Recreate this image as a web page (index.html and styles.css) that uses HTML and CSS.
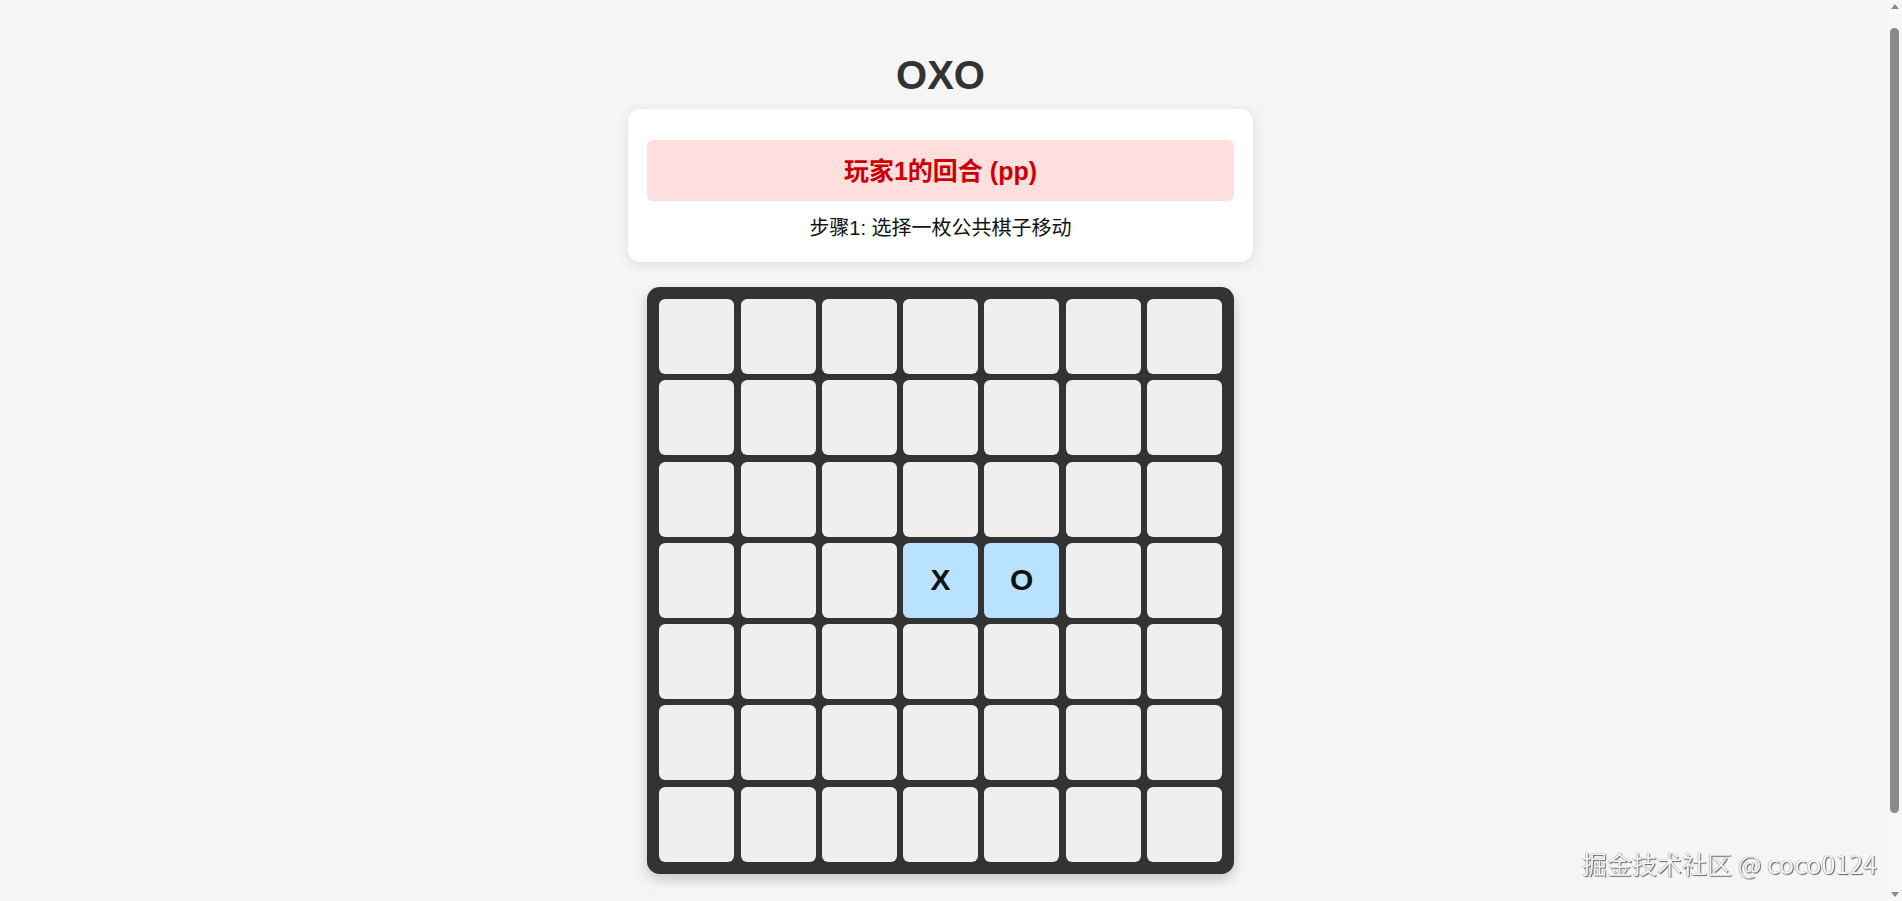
FILE: index.html
```html
<!DOCTYPE html>
<html lang="zh-CN">
<head>
<meta charset="utf-8">
<title>OXO</title>
<link rel="stylesheet" href="styles.css">
</head>
<body>
<main class="app">
  <h1 class="title">OXO</h1>
  <section class="status-card">
    <div class="turn">玩家1的回合 (pp)</div>
    <p class="step">步骤1: 选择一枚公共棋子移动</p>
  </section>
  <div class="board">
    <div class="cell"></div><div class="cell"></div><div class="cell"></div><div class="cell"></div><div class="cell"></div><div class="cell"></div><div class="cell"></div>
    <div class="cell"></div><div class="cell"></div><div class="cell"></div><div class="cell"></div><div class="cell"></div><div class="cell"></div><div class="cell"></div>
    <div class="cell"></div><div class="cell"></div><div class="cell"></div><div class="cell"></div><div class="cell"></div><div class="cell"></div><div class="cell"></div>
    <div class="cell"></div><div class="cell"></div><div class="cell"></div><div class="cell public">X</div><div class="cell public">O</div><div class="cell"></div><div class="cell"></div>
    <div class="cell"></div><div class="cell"></div><div class="cell"></div><div class="cell"></div><div class="cell"></div><div class="cell"></div><div class="cell"></div>
    <div class="cell"></div><div class="cell"></div><div class="cell"></div><div class="cell"></div><div class="cell"></div><div class="cell"></div><div class="cell"></div>
    <div class="cell"></div><div class="cell"></div><div class="cell"></div><div class="cell"></div><div class="cell"></div><div class="cell"></div><div class="cell"></div>
  </div>
</main>
<div class="watermark">掘金技术社区 @ coco0124</div>
<div class="scrollbar" aria-hidden="true">
  <span class="scroll-arrow up"></span>
  <span class="scroll-thumb"></span>
  <span class="scroll-arrow down"></span>
</div>
</body>
</html>
```

FILE: styles.css
```css
* {
  box-sizing: border-box;
}

html, body {
  margin: 0;
  padding: 0;
}

body {
  background: #f5f5f5;
  font-family: "Liberation Sans", Arial, "Noto Sans CJK SC", sans-serif;
  color: #333;
}

.app {
  display: flex;
  flex-direction: column;
  align-items: center;
  padding: 51.5px 21px 126.5px 0;
}

.title {
  margin: 0 0 11.5px;
  font-size: 40px;
  line-height: 46px;
  font-weight: bold;
  color: #333;
}

.status-card {
  width: 625px;
  background: #fff;
  border-radius: 12.5px;
  padding: 18.75px;
  box-shadow: 0 2.5px 12.5px rgba(0, 0, 0, 0.1);
  text-align: center;
}

.turn {
  margin: 12.5px 0;
  padding: 12.5px;
  background: #ffdede;
  border-radius: 6.25px;
  color: #cc0000;
  font-size: 25px;
  line-height: 36px;
  font-weight: bold;
}

.step {
  margin: 0;
  font-size: 20px;
  line-height: 29px;
  color: #111;
}

.board {
  margin-top: 25px;
  display: grid;
  grid-template-columns: repeat(7, 75px);
  grid-template-rows: repeat(7, 75px);
  gap: 6.25px;
  padding: 12.5px;
  background: #333;
  border-radius: 12.5px;
  box-shadow: 0 5px 12.5px rgba(0, 0, 0, 0.2);
}

.cell {
  background: #efefef;
  border-radius: 6.25px;
  display: flex;
  align-items: center;
  justify-content: center;
  font-size: 30px;
  font-weight: bold;
  color: #111;
}

.cell.public {
  background: #b8e2ff;
}

.watermark {
  position: fixed;
  right: 25px;
  bottom: 22px;
  font-family: "Noto Sans CJK SC", sans-serif;
  font-size: 25px;
  line-height: 32px;
  color: #f4f4f4;
  text-shadow: 1px 1px 1px #666, -0.5px -0.5px 0.5px #999;
  pointer-events: none;
}

.scrollbar {
  position: fixed;
  top: 0;
  right: 0;
  width: 15px;
  height: 100vh;
  background: #f7f7f7;
  display: flex;
  flex-direction: column;
  align-items: center;
}

.scroll-arrow {
  width: 0;
  height: 0;
  border-left: 4px solid transparent;
  border-right: 4px solid transparent;
  flex: none;
}

.scroll-arrow.up {
  margin-top: 4px;
  border-bottom: 5px solid #8a8a8a;
}

.scroll-arrow.down {
  margin-bottom: 4px;
  border-top: 5px solid #8a8a8a;
}

.scroll-thumb {
  width: 9px;
  height: 785px;
  margin: 19px 0 auto;
  background: #8a8a8a;
  border-radius: 5px;
}
```
